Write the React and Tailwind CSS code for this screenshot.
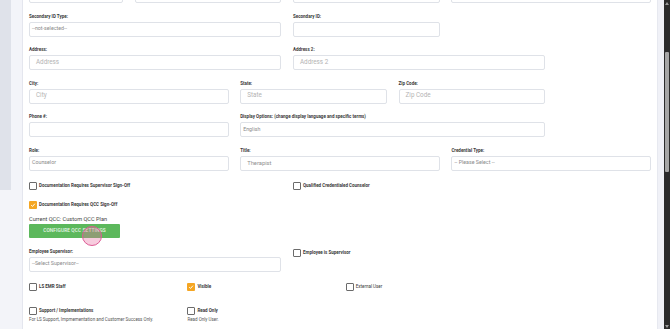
import React from "react";

const Label = ({ children }) => (
  <div className="h-[6px] leading-[6px] text-[4.5px] font-bold text-[#3a3a3a] mb-[2px] whitespace-nowrap">
    {children}
  </div>
);

const Box = ({ children, kind = "input", dark = false }) => (
  <div
    className={
      "h-[15px] border border-[#dfe2e8] rounded-[2px] bg-white flex items-center whitespace-nowrap " +
      (kind === "select"
        ? "pl-[2px] text-[5.3px] text-[#8a8a8a]"
        : dark
        ? "pl-[6px] text-[5.8px] text-[#8f8f8f]"
        : "pl-[6px] text-[6.3px] text-[#b3b3b3]")
    }
  >
    {children}
  </div>
);

const Field = ({ span, label, children }) => (
  <div className={span}>
    {label !== undefined && <Label>{label}</Label>}
    {children}
  </div>
);

const Check = ({ checked = false, label, bold = true }) => (
  <div className="flex items-center gap-[2px]">
    {checked ? (
      <div className="w-[8px] h-[8px] rounded-[1px] bg-[#f5a623] flex items-center justify-center">
        <svg width="6" height="6" viewBox="0 0 10 10">
          <path d="M2 5.2 L4.2 7.4 L8.2 2.8" fill="none" stroke="white" strokeWidth="1.6" />
        </svg>
      </div>
    ) : (
      <div className="w-[8px] h-[8px] rounded-[1px] border border-[#6b6b6b] bg-white" />
    )}
    <span
      className={
        "text-[4.5px] leading-[6px] text-[#3a3a3a] whitespace-nowrap " +
        (bold ? "font-bold" : "font-normal")
      }
    >
      {label}
    </span>
  </div>
);

const Grid = ({ children, className = "" }) => (
  <div className={"grid grid-cols-12 gap-x-[11.6px] w-[622px] " + className}>{children}</div>
);

export default function App() {
  return (
    <div className="flex w-[670px] h-[329px] overflow-hidden bg-[#f3f4f9] font-['Roboto','Liberation_Sans',sans-serif]">
      <div className="w-[11px] shrink-0 flex flex-col">
        <div className="h-[190px] bg-[#dfe2ea]" />
      </div>
      <div className="w-[11px] shrink-0" />
      <div className="w-[635px] shrink-0 bg-white border-l border-[#e4e6ee] overflow-hidden">
        <div className="pl-[6px] -mt-[20px] flex flex-col">
          <div className="flex flex-col gap-y-[10.5px]">
            <Grid>
              <Field span="col-span-2" label="">
                <Box />
              </Field>
              <Field span="col-span-3" label="">
                <Box />
              </Field>
              <Field span="col-span-3" label="">
                <Box />
              </Field>
              <Field span="col-span-4" label="">
                <Box />
              </Field>
            </Grid>
            <Grid>
              <Field span="col-span-5" label="Secondary ID Type:">
                <Box kind="select">--not-selected--</Box>
              </Field>
              <Field span="col-span-3" label="Secondary ID:">
                <Box />
              </Field>
            </Grid>
            <Grid>
              <Field span="col-span-5" label="Address:">
                <Box>Address</Box>
              </Field>
              <Field span="col-span-5" label="Address 2:">
                <Box>Address 2</Box>
              </Field>
            </Grid>
            <Grid>
              <Field span="col-span-4" label="City:">
                <Box>City</Box>
              </Field>
              <Field span="col-span-3" label="State:">
                <Box>State</Box>
              </Field>
              <Field span="col-span-3" label="Zip Code:">
                <Box>Zip Code</Box>
              </Field>
            </Grid>
            <Grid>
              <Field span="col-span-4" label="Phone #:">
                <Box />
              </Field>
              <Field span="col-span-6" label="Display Options: (change display language and specific terms)">
                <Box kind="select">English</Box>
              </Field>
            </Grid>
            <Grid>
              <Field span="col-span-4" label="Role:">
                <Box kind="select">Counselor</Box>
              </Field>
              <Field span="col-span-4" label="Title:">
                <Box dark>Therapist</Box>
              </Field>
              <Field span="col-span-4" label="Credential Type:">
                <Box kind="select">-- Please Select --</Box>
              </Field>
            </Grid>
          </div>

          <Grid className="mt-[11px]">
            <div className="col-span-5">
              <Check label="Documentation Requires Supervisor Sign-Off" />
            </div>
            <div className="col-span-7">
              <Check label="Qualified Credentialed Counselor" />
            </div>
          </Grid>
          <div className="mt-[11px]">
            <Check checked label="Documentation Requires QCC Sign-Off" />
          </div>
          <div className="mt-[6px] h-[8px] leading-[8px] text-[5.6px] text-[#444] whitespace-nowrap">
            Current QCC: Custom QCC Plan
          </div>
          <div className="mt-[1px] relative w-[91px] h-[14px] bg-[#5cb85c] rounded-[1px] flex items-center justify-center">
            <span className="text-[4.8px] font-medium text-[#eaf6ea] tracking-[0.1px] whitespace-nowrap">
              CONFIGURE QCC SETTINGS
            </span>
            <div className="absolute left-[53px] top-[2.5px] w-[20px] h-[20px] rounded-full border border-[#de5c95] bg-[rgba(232,110,160,0.35)]" />
          </div>

          <Grid className="mt-[11px]">
            <Field span="col-span-5" label="Employee Supervisor:">
              <Box kind="select">--Select Supervisor--</Box>
            </Field>
            <div className="col-span-4">
              <Check label="Employee is Supervisor" />
            </div>
          </Grid>

          <Grid className="mt-[11px]">
            <div className="col-span-3">
              <Check label="LS EMR Staff" />
            </div>
            <div className="col-span-3">
              <Check checked label="Visible" />
            </div>
            <div className="col-span-3">
              <Check label="External User" bold={false} />
            </div>
          </Grid>

          <Grid className="mt-[16px]">
            <div className="col-span-3">
              <Check label="Support / Implementations" />
              <div className="mt-[2px] text-[4.5px] leading-[6px] text-[#555] whitespace-nowrap">
                For LS Support, Impmementation and Customer Success Only.
              </div>
            </div>
            <div className="col-span-3">
              <Check label="Read Only" />
              <div className="mt-[2px] text-[4.5px] leading-[6px] text-[#555] whitespace-nowrap">
                Read Only User.
              </div>
            </div>
          </Grid>
        </div>
      </div>
      <div className="w-[7px] shrink-0 bg-[#f0f1f7] border-l border-[#e7e9f0]" />
      <div className="w-[6px] shrink-0 bg-[#2b2b2b] flex flex-col items-center">
        <div className="h-[6px] flex items-center justify-center">
          <svg width="4" height="3" viewBox="0 0 4 3">
            <path d="M0 3 L2 0 L4 3 Z" fill="#9a9a9a" />
          </svg>
        </div>
        <div className="h-[46px]" />
        <div className="w-[4px] h-[120px] bg-[#a6a6a6] rounded-[1px]" />
        <div className="flex-1" />
        <div className="h-[6px] flex items-center justify-center">
          <svg width="4" height="3" viewBox="0 0 4 3">
            <path d="M0 0 L4 0 L2 3 Z" fill="#9a9a9a" />
          </svg>
        </div>
      </div>
    </div>
  );
}
